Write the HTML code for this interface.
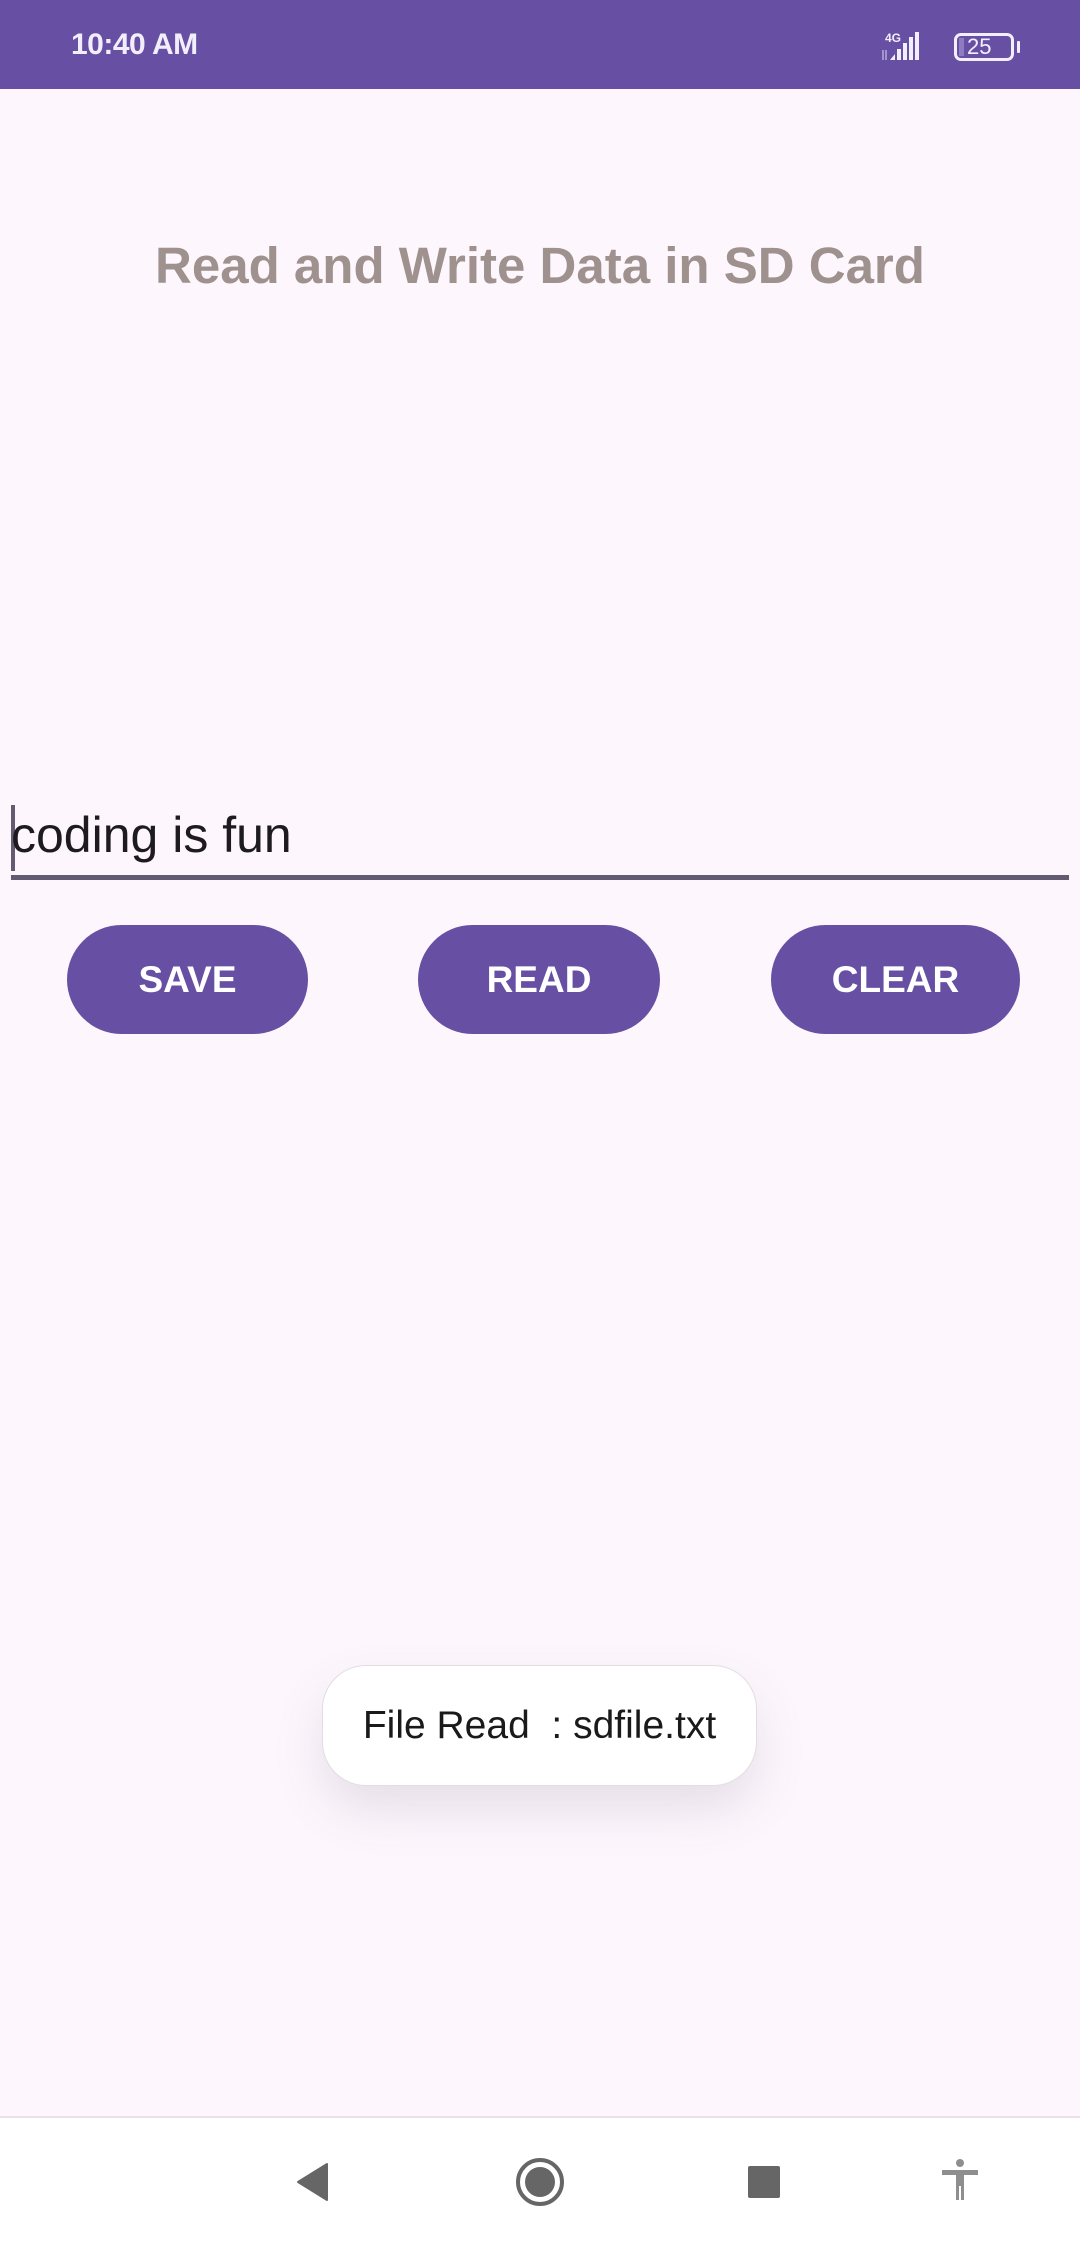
<!DOCTYPE html>
<html><head><meta charset="utf-8"><style>
*{margin:0;padding:0;box-sizing:border-box}
body{width:1080px;height:2246px;background:#fdf7fd;font-family:"Liberation Sans",sans-serif;position:relative;overflow:hidden}
.sb{position:absolute;top:0;left:0;width:1080px;height:89px;background:#6750a4;color:#f3eefb}
.time{position:absolute;left:71px;top:28px;font-size:30px;font-weight:bold;letter-spacing:-0.5px}
.title{position:absolute;top:236px;left:0;width:1080px;text-align:center;font-size:51px;font-weight:bold;color:#9e918e}
.edit{position:absolute;left:11px;top:806px;font-size:50px;color:#1d1b20}
.cursor{position:absolute;left:11px;top:805px;width:4px;height:66px;background:#625b71}
.line{position:absolute;left:11px;top:875px;width:1058px;height:5px;background:#625b71}
.btn{position:absolute;top:925px;height:109px;border-radius:55px;background:#6750a4;color:#fff;font-size:37px;font-weight:bold;display:flex;align-items:center;justify-content:center}
.toast{position:absolute;left:322px;top:1665px;width:435px;height:121px;background:#fff;border-radius:44px;border:1px solid #e2dde2;box-shadow:0 24px 50px rgba(80,60,90,0.13);display:flex;align-items:center;justify-content:center;font-size:39px;color:#1a1a1a}
.nav{position:absolute;left:0;top:2116px;width:1080px;height:130px;background:#fff;border-top:2px solid #e6e2e6}
</style></head><body>
<div class="sb">
<div class="time">10:40 AM</div>
<div style="position:absolute;left:885px;top:31px;font-size:12px;font-weight:bold">4G</div>
<svg style="position:absolute;left:880px;top:28px" width="60" height="34">
<path d="M3 22v10M6 22v10" stroke="#b7a9dc" stroke-width="1.5"/>
<path d="M10 32l5-6v6z" fill="#f3eefb"/>
<rect x="17" y="21" width="4" height="11" fill="#f3eefb"/>
<rect x="23" y="15" width="4" height="17" fill="#f3eefb"/>
<rect x="29" y="9" width="4" height="23" fill="#f3eefb"/>
<rect x="35" y="4" width="4" height="28" fill="#f3eefb"/>
</svg>
<div style="position:absolute;left:954px;top:33px;width:60px;height:28px;border:3px solid #f3eefb;border-radius:7px"></div>
<div style="position:absolute;left:959px;top:38px;width:5px;height:18px;background:#8e7cc3"></div>
<div style="position:absolute;left:967px;top:33px;font-size:22px;color:#f3eefb;line-height:28px">25</div>
<div style="position:absolute;left:1017px;top:41px;width:3px;height:12px;background:#f3eefb;border-radius:1px"></div>
</div>
<div class="title">Read and Write Data in SD Card</div>
<div class="cursor"></div>
<div class="edit">coding is fun</div>
<div class="line"></div>
<div class="btn" style="left:67px;width:241px">SAVE</div>
<div class="btn" style="left:418px;width:242px">READ</div>
<div class="btn" style="left:771px;width:249px">CLEAR</div>
<div class="toast">File Read&nbsp; : sdfile.txt</div>
<div class="nav">
<svg width="1080" height="130" style="position:absolute;left:0;top:-2px">
<path d="M327 48 L298 66 L327 84 Z" fill="#666" stroke="#666" stroke-width="2" stroke-linejoin="round"/>
<circle cx="540" cy="66" r="22" fill="none" stroke="#666" stroke-width="4"/>
<circle cx="540" cy="66" r="15" fill="#666"/>
<rect x="748" y="50" width="32" height="32" rx="2" fill="#666"/>
<circle cx="960" cy="47" r="4" fill="#8e8e8e"/>
<path d="M942 54h36v5h-14v25h-3v-14h-2v14h-3v-25h-14z" fill="#8e8e8e"/>
</svg>
</div>
</body></html>
